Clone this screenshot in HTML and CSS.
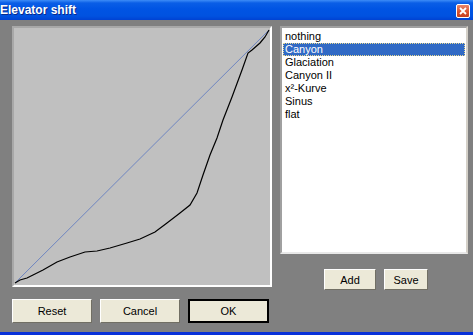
FILE: index.html
```html
<!DOCTYPE html>
<html lang="en">
<head>
    <meta charset="UTF-8">
    <title>Elevator shift</title>
    <link rel="stylesheet" href="styles.css">
</head>
<body>
    <div class="window">
        <div class="titlebar">
            <span class="title">Elevator shift</span>
            <button class="close" title="Close">
                <svg width="8" height="8" viewBox="0 0 8 8">
                    <path d="M1 1 L7 7 M7 1 L1 7" stroke="#fff" stroke-width="1.8" fill="none"/>
                </svg>
            </button>
        </div>
        <div class="content">
            <div class="left">
                <div class="graph">
                    <svg width="256" height="257" viewBox="0 0 256 257">
                        <line x1="1" y1="255" x2="255" y2="2" stroke="#6f86c0" stroke-width="1"/>
                        <polyline fill="none" stroke="#000" stroke-width="1.2"
                            points="1,255 6,252 13,250 19,247 29,242 43,234 56,229 71,224 83,223 96,220 113,215 126,211 141,204 153,195 166,185 176,177 183,165 189,147 196,127 203,110 209,92 218,69 228,42 234,25 238,22 246,15 251,9 255,2"/>
                    </svg>
                </div>
                <div class="buttons">
                    <button class="btn wide">Reset</button>
                    <button class="btn wide">Cancel</button>
                    <button class="btn wide default">OK</button>
                </div>
            </div>
            <div class="right">
                <ul class="list">
                    <li>nothing</li>
                    <li class="selected">Canyon</li>
                    <li>Glaciation</li>
                    <li>Canyon II</li>
                    <li>x&sup2;-Kurve</li>
                    <li>Sinus</li>
                    <li>flat</li>
                </ul>
                <div class="list-buttons">
                    <button class="btn add">Add</button>
                    <button class="btn save">Save</button>
                </div>
            </div>
        </div>
    </div>
</body>
</html>
```

FILE: styles.css
```css
body {
    margin: 0;
    font-family: "Liberation Sans", Arial, sans-serif;
    font-size: 11px;
    background-color: #808080;
}
.window {
    width: 473px;
    height: 335px;
    display: flex;
    flex-direction: column;
    box-sizing: border-box;
    border-bottom: 3px solid #0831d9;
}
.titlebar {
    height: 20px;
    display: flex;
    align-items: center;
    justify-content: space-between;
    padding-right: 3px;
    background-image: linear-gradient(to bottom, #3d8cf7 0, #0a5ee6 3px, #0054e3 45%, #0052e0 80%, #0042d2 100%);
}
.title {
    color: white;
    font-weight: bold;
    font-size: 12px;
    text-shadow: 1px 1px 0 #0a2a8a;
}
.close {
    width: 14px;
    height: 14px;
    padding: 0;
    margin-top: 1px;
    display: flex;
    align-items: center;
    justify-content: center;
    border: 1px solid #fff;
    border-radius: 2px;
    background-image: linear-gradient(to bottom, #e8866c, #d9512c 60%, #c4401f);
}
.content {
    flex: 1;
    display: flex;
    gap: 8px;
    padding: 6px 0 0 12px;
    background-color: #808080;
}
.left {
    display: flex;
    flex-direction: column;
    gap: 12px;
}
.graph {
    width: 256px;
    height: 257px;
    border: 2px solid;
    border-color: #a8a8a8 #fff #fff #a8a8a8;
    background-color: #c0c0c0;
}
.graph svg {
    display: block;
}
.buttons {
    display: flex;
    gap: 8px;
}
.btn {
    font-family: "Liberation Sans", Arial, sans-serif;
    font-size: 11px;
    color: #000;
    background-color: #ece9d8;
    border: 1px solid;
    border-color: #fff #716f64 #716f64 #fff;
    padding: 0;
}
.wide {
    width: 80px;
    height: 24px;
}
.default {
    width: 81px;
    border: 2px solid #000;
}
.right {
    display: flex;
    flex-direction: column;
    gap: 15px;
}
.list {
    width: 182px;
    height: 222px;
    margin: 0;
    padding: 2px 1px 0 1px;
    list-style: none;
    background-color: #fff;
    border: 2px solid;
    border-color: #a0a0a0 #d4d0c8 #e8e8e8 #a0a0a0;
    box-sizing: content-box;
}
.list li {
    height: 13px;
    line-height: 13px;
    padding-left: 2px;
}
.list .selected {
    background-color: #316ac5;
    color: white;
    outline: 1px dotted #e8d890;
    outline-offset: -1px;
}
.list-buttons {
    display: flex;
    gap: 8px;
    padding-left: 44px;
}
.add {
    width: 52px;
    height: 21px;
}
.save {
    width: 44px;
    height: 21px;
}
```
